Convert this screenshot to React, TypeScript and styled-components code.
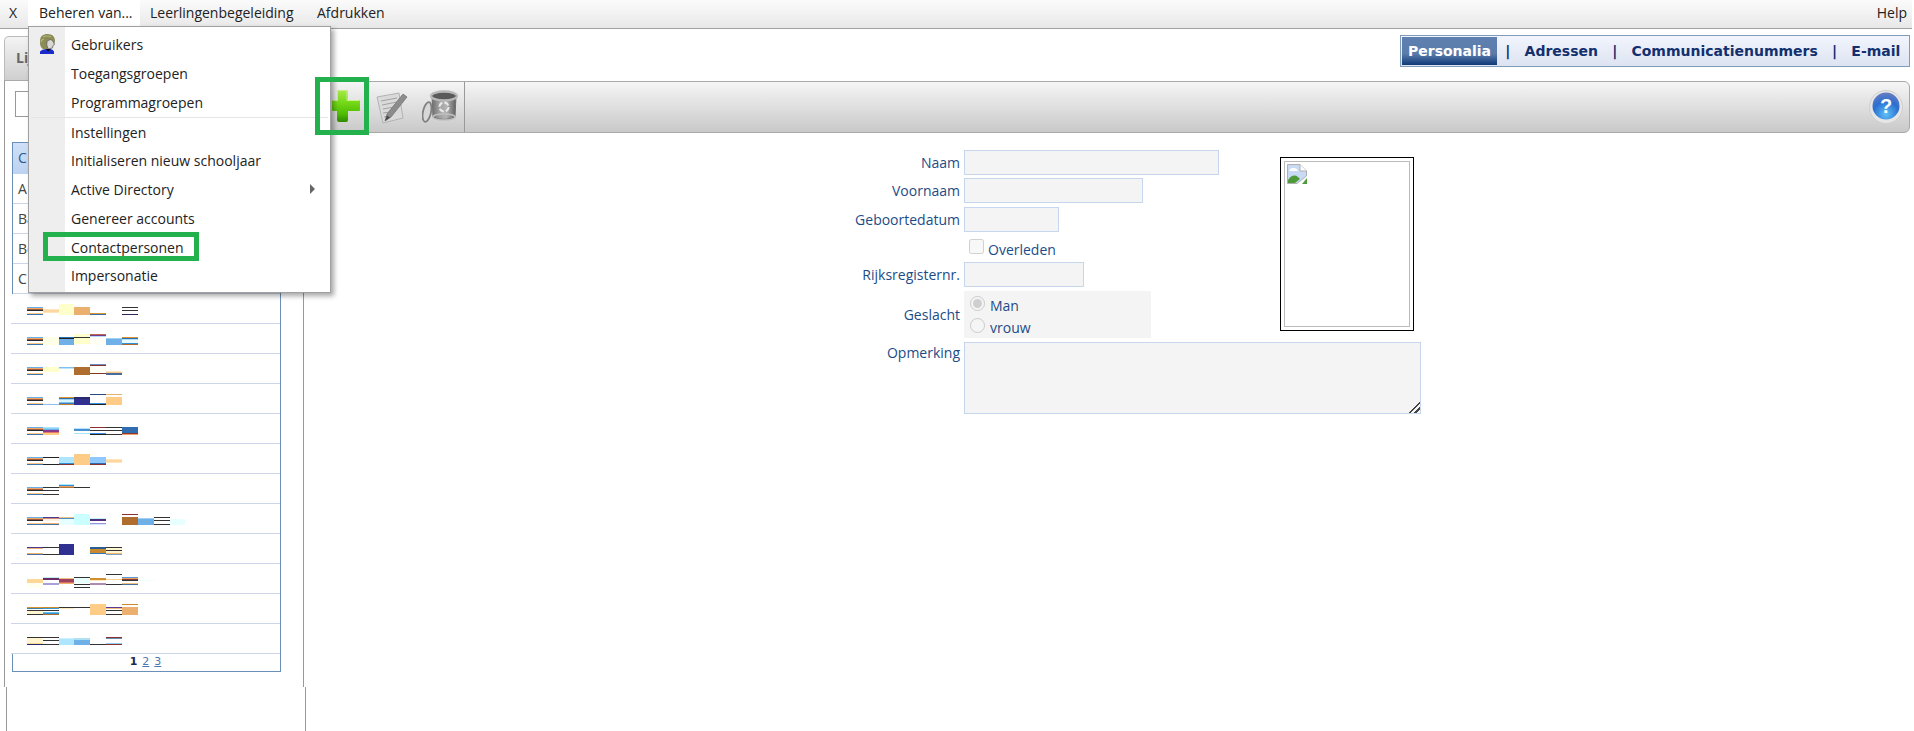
import React from "react";
import styled, { createGlobalStyle } from "styled-components";

const Global = createGlobalStyle`
  html, body { margin: 0; padding: 0; background: #fff; overflow: hidden; }
  body { font-family: "Open Sans", "Noto Sans", sans-serif; font-size: 14px; }
  * { box-sizing: border-box; }
`;

const Page = styled.div`
  position: relative;
  width: 1914px;
  height: 731px;
  overflow: hidden;
  background: #fff;
`;

const MenuBar = styled.div`
  display: flex;
  align-items: center;
  height: 29px;
  margin-right: 2px;
  padding-bottom: 1px;
  background: linear-gradient(#fbfbfb, #e8e8e8);
  border-bottom: 1px solid #a0a0a0;
`;

const MenuItem = styled.div<{ $active?: boolean; $push?: boolean; $w?: number; $left?: number }>`
  height: 28px;
  line-height: 25px;
  padding: 0 ${(p) => (p.$push ? 5 : 0)}px 0 ${(p) => p.$left ?? 10}px;
  width: ${(p) => (p.$w ? `${p.$w}px` : "auto")};
  white-space: nowrap;
  color: #222;
  background: ${(p) => (p.$active ? "#fff" : "transparent")};
  margin-left: ${(p) => (p.$push ? "auto" : "0")};
`;

const Body = styled.div`
  display: flex;
  align-items: stretch;
  height: 702px;
`;

const LeftColumn = styled.div`
  width: 302px;
  margin-left: 4px;
  padding-top: 7px;
  display: flex;
  flex-direction: column;
  flex: none;
`;

const Tab = styled.div`
  width: 120px;
  height: 44px;
  padding: 11px 0 0 11px;
  font-weight: 700;
  font-size: 14px;
  color: #666;
  border: 1px solid #bbb;
  border-bottom: 0;
  border-radius: 5px 5px 0 0;
  background: linear-gradient(#f4f4f4, #cfcfcf);
`;

const Panel = styled.div`
  height: 607px;
  width: 300px;
  border-left: 1px solid #999;
  border-right: 1px solid #999;
  border-top: 1px solid #aaa;
  padding: 10px 0 0 10px;
`;

const LowerPanel = styled.div`
  flex: 1;
  width: 300px;
  margin-left: 2px;
  border-left: 1px solid #999;
  border-right: 1px solid #999;
`;

const Search = styled.div`
  width: 180px;
  height: 26px;
  border: 1px solid #999;
`;

const Table = styled.div`
  margin: 25px 0 0 -3px;
  width: 269px;
  border: 1px solid #6a8fb8;
  border-top-width: 1px;
`;

const HeaderRow = styled.div`
  height: 31px;
  background: linear-gradient(#cfe0f8, #bcd3f2);
  color: #2a5a90;
  font-size: 14px;
  line-height: 30px;
  padding-left: 5px;
`;

const TextRow = styled.div`
  height: 30px;
  border-bottom: 1px solid #ccd6e8;
  color: #444;
  font-size: 14px;
  line-height: 29px;
  padding-left: 5px;
`;

const StripeRow = styled.div`
  height: 30px;
  margin-left: -2px;
  position: relative;
  background: #fff;
  border-bottom: 1px solid #ccd6e8;
`;

const StripeArt = styled.svg`
  display: block;
`;

const Pager = styled.div`
  height: 17px;
  display: flex;
  justify-content: center;
  gap: 5px;
  font-family: "DejaVu Sans", sans-serif;
  font-size: 11px;
  line-height: 16px;
  padding-right: 2px;
`;

const PageNum = styled.span<{ $current?: boolean }>`
  font-weight: ${(p) => (p.$current ? 700 : 400)};
  color: ${(p) => (p.$current ? "#1d2b50" : "#4a78b4")};
  text-decoration: ${(p) => (p.$current ? "none" : "underline")};
`;

const RightColumn = styled.div`
  flex: 1;
  min-width: 0;
  padding-right: 4px;
  display: flex;
  flex-direction: column;
  align-items: stretch;
`;

const TabStrip = styled.div`
  align-self: flex-end;
  display: flex;
  align-items: stretch;
  margin-top: 6px;
  height: 32px;
  padding: 1px;
  width: 510px;
  border: 1px solid #7f9db9;
  background: linear-gradient(#f2f5fc, #dde3f2);
  font-family: "DejaVu Sans", sans-serif;
  font-weight: 700;
  font-size: 14px;
  color: #12306e;
`;

const StripTab = styled.div<{ $active?: boolean }>`
  padding: 0 6px;
  line-height: 28px;
  white-space: nowrap;
  color: ${(p) => (p.$active ? "#fff" : "#12306e")};
  background: ${(p) =>
    p.$active ? "linear-gradient(#5f80b0 0, #5a7cab 60%, #0f3a78 100%)" : "transparent"};
`;

const StripSep = styled.div`
  line-height: 28px;
  width: 21.500px;
  text-align: center;
`;

const Toolbar = styled.div`
  margin-top: 14px;
  margin-left: 3px;
  height: 52px;
  flex: none;
  display: flex;
  align-items: center;
  border: 1px solid #a8a8a8;
  border-radius: 6px;
  background: linear-gradient(#f5f5f5, #c9c9c9);
  padding-left: 21px;
`;

const ToolIcon = styled.svg<{ $gap?: number; $lift?: number }>`
  flex: none;
  display: block;
  margin-left: ${(p) => p.$gap ?? 0}px;
  margin-top: ${(p) => -(p.$lift ?? 0)}px;
  filter: blur(0.4px);
`;

const ToolSeparator = styled.div`
  align-self: stretch;
  width: 1px;
  margin-left: 6px;
  background: #999;
`;

const HelpButton = styled.svg`
  margin-left: auto;
  margin-right: 6px;
  display: block;
`;

const Form = styled.div`
  margin-top: 17px;
  padding-left: 458px;
  display: grid;
  grid-template-columns: 200px 316px 141px;
  grid-template-rows: 28px 29px 28px 27px 29px 51px 72px;
  color: #1c4c86;
`;

const Label = styled.div<{ $row: number; $lift?: number }>`
  grid-column: 1;
  grid-row: ${(p) => p.$row};
  text-align: right;
  padding-right: 4px;
  line-height: 25px;
  align-self: start;
  margin-top: ${(p) => -(p.$lift ?? 0)}px;
`;

const TextField = styled.input<{ $row: number; $w: number }>`
  grid-column: 2;
  grid-row: ${(p) => p.$row};
  width: ${(p) => p.$w}px;
  height: 25px;
  padding: 0;
  background: #f4f4f4;
  border: 1px solid #c6d6ec;
  border-radius: 0;
`;

const CheckLine = styled.label`
  grid-column: 2;
  grid-row: 4;
  display: flex;
  align-items: flex-start;
  padding: 4px 0 0 5px;
  gap: 4px;
`;

const Box = styled.input`
  margin: 0;
  width: 15px;
  height: 15px;
  flex: none;
`;

const CheckText = styled.span`
  line-height: 22px;
`;

const RadioBlock = styled.div`
  grid-column: 2;
  grid-row: 6;
  width: 187px;
  height: 47px;
  background: #f4f4f4;
  padding: 5px 0 0 6px;
  display: flex;
  flex-direction: column;
  gap: 7px;
  overflow: hidden;
`;

const RadioLine = styled.label`
  display: flex;
  align-items: flex-start;
  gap: 5px;
  height: 15px;
`;

const RadioText = styled.span`
  line-height: 20px;
`;

const Notes = styled.textarea`
  grid-column: 2 / span 2;
  grid-row: 7;
  width: 457px;
  height: 72px;
  margin: 0;
  padding: 0;
  display: block;
  background: #f4f4f4;
  border: 1px solid #c6d6ec;
  border-radius: 0;
  &::-webkit-resizer {
    background: linear-gradient(
      135deg,
      transparent 62%,
      #444 62%,
      #444 69%,
      transparent 69%,
      transparent 80%,
      #444 80%,
      #444 87%,
      transparent 87%
    );
  }
`;

const Photo = styled.div`
  grid-column: 3;
  grid-row: 1 / span 6;
  width: 134px;
  height: 174px;
  margin-top: 7px;
  border: 1px solid #000;
  padding: 3px;
`;

const PhotoInner = styled.div`
  height: 100%;
  border: 1px solid #bbb;
  padding: 2px;
`;

const DropMenu = styled.div`
  position: absolute;
  left: 28px;
  top: 26px;
  width: 303px;
  height: 267px;
  background: linear-gradient(90deg, #eeeeee 36px, #ffffff 36px);
  border: 1px solid #a0a0a0;
  box-shadow: 3px 3px 5px rgba(0, 0, 0, 0.35);
  padding-top: 3px;
  color: #222;
  z-index: 3;
`;

const DropItem = styled.div<{ $h: number }>`
  height: ${(p) => p.$h}px;
  line-height: ${(p) => p.$h}px;
  padding-left: 42px;
  position: relative;
`;

const DropDivider = styled.div`
  height: 1px;
  margin: 0 2px;
  background: #e4e4e4;
`;

const UserIcon = styled.svg`
  position: absolute;
  left: 9px;
  top: 3px;
`;

const Arrow = styled.span`
  position: absolute;
  right: 15px;
  top: 9px;
  width: 0;
  height: 0;
  border-left: 5px solid #666;
  border-top: 5px solid transparent;
  border-bottom: 5px solid transparent;
`;

const Highlight = styled.div<{ $x: number; $y: number; $w: number; $h: number }>`
  position: absolute;
  left: ${(p) => p.$x}px;
  top: ${(p) => p.$y}px;
  width: ${(p) => p.$w}px;
  height: ${(p) => p.$h}px;
  border: 5px solid #22b14c;
  z-index: 4;
`;

type L = [number, number, string, number?];
type Cell = [number, L[]];

const X = [27, 43, 59, 74, 90, 106, 122, 138, 154, 170, 185];

const F: L[] = [
  [13, 1, "#6aaee8"],
  [14, 1, "#eda868"],
  [15, 1, "#a0583a"],
  [16, 1, "#2a2a2a"],
  [19, 1, "#ffc98a"],
  [20, 1, "#3e76ac"],
];

const D = "#333333";

const rows: Cell[][] = [
  [
    [0, F],
    [1, [[15, 4, "#ffe4bc"], [16, 2, "#fdd7a2"]]],
    [2, [[10, 11, "#ffffcc"]]],
    [3, [[13, 8, "#ebb06f"]]],
    [4, [[19, 1, "#d9942f"], [20, 1, "#3a6ea5"]]],
    [6, [[13, 1, D], [16, 1, D], [20, 1, "#2a2a5a"]]],
  ],
  [
    [0, F],
    [1, [[13, 8, "#ffffe8"]]],
    [2, [[13, 1, "#2a6db0"], [14, 1, "#222"], [15, 6, "#6fb0e8"]]],
    [3, [[10, 10, "#ffffcc"], [13, 1, D]]],
    [4, [[10, 1, "#b5694a"], [11, 1, "#7a3a8a"], [12, 1, "#b8d8ff"], [13, 8, "#fffff5"]]],
    [5, [[14, 1, "#a0d0f5"], [15, 6, "#6fb0e8"]]],
    [6, [[13, 1, "#d9942f"], [14, 1, "#2a6db0"], [15, 1, "#aee0f8"], [16, 3, "#e8fbff"], [19, 1, "#3090d8"], [20, 1, "#b06a30"]]],
  ],
  [
    [0, F],
    [1, [[13, 5, "#ffffcc"]]],
    [2, [[13, 1, "#7fc0f0"], [14, 1, "#bfe6ff"]]],
    [3, [[13, 8, "#b06d30"]]],
    [4, [[10, 1, "#6a8fc0"], [11, 1, "#8a3030"], [12, 7, "#fffff5"], [19, 1, "#803a20"]]],
    [5, [[17, 1, "#ffe8c0"], [18, 1, "#f5c890"], [19, 2, "#4a6a9a"]]],
  ],
  [
    [0, F],
    [1, [[20, 1, "#8fc0f0"]]],
    [2, [[13, 1, "#d9942f"], [14, 1, "#3a6ea5"], [15, 1, "#9ad8f5"], [16, 2, "#d8f6ff"], [18, 1, "#7fc0e8"], [19, 1, "#3a80c0"], [20, 1, "#c08030"]]],
    [3, [[13, 2, "#2a2a6a"], [15, 6, "#303090"]]],
    [4, [[10, 1, "#2a4a7a"], [19, 1, "#3a90e0"], [20, 1, "#222"]]],
    [5, [[10, 1, "#ebb06f"], [13, 8, "#ffcc88"]]],
  ],
  [
    [0, F],
    [1, [[13, 1, "#aee6ff"], [14, 1, "#8fd0f5"], [15, 1, "#6fb0e8"], [16, 2, "#8a3a8a"], [18, 1, "#e07a6a"], [19, 2, "#ffcc88"]]],
    [3, [[14, 1, "#aee6ff"], [15, 2, "#4a90d0"], [19, 1, "#aee6ff"]]],
    [4, [[13, 1, "#8a3030"], [16, 1, D], [19, 1, "#3a90e0"], [20, 1, "#222"]]],
    [5, [[13, 1, D], [16, 1, D], [20, 1, D]]],
    [6, [[13, 6, "#2f6db0"], [19, 1, "#8a3a30"], [20, 1, "#f0a060"]]],
  ],
  [
    [0, F],
    [1, [[13, 1, "#222"], [20, 1, "#222"]]],
    [2, [[13, 6, "#aee6ff"], [19, 1, "#3090d8"], [20, 1, "#8a3030"]]],
    [3, [[10, 11, "#ffcc88"]]],
    [4, [[13, 6, "#8fc8ff"], [19, 1, "#2f6db0"], [20, 1, "#8a3030"]]],
    [5, [[15, 4, "#ffe4bc"], [16, 2, "#fdd7a2"]]],
  ],
  [
    [0, F],
    [1, [[13, 1, D], [16, 1, D], [20, 1, D]]],
    [2, [[10, 1, "#aee6ff"], [11, 1, "#3090d8"], [12, 1, "#e8a060"], [13, 1, "#b0703a"]]],
    [3, [[13, 1, D]]],
  ],
  [
    [0, F],
    [1, [[13, 1, "#4a3a90"], [14, 1, "#d08a7a"], [15, 2, "#fff0e0"], [19, 1, "#f0b070"], [20, 1, "#4a70a0"]]],
    [2, [[13, 1, "#f0c080"], [14, 1, "#4a90c0"], [15, 6, "#e8ffff"]]],
    [3, [[10, 11, "#ccffff"]]],
    [4, [[14, 1, "#c0f5f0"], [15, 2, "#503080"], [19, 1, "#a090e0"], [20, 1, "#d0e8ff"]]],
    [6, [[10, 1, "#8a3030"], [13, 8, "#b06d30"]]],
    [7, [[14, 1, "#a0d0f5"], [15, 6, "#6fb0e8"]]],
    [8, [[13, 1, D], [16, 1, D], [20, 1, D]]],
    [9, [[15, 6, "#e8ffff"]]],
  ],
  [
    [0, [[13, 1, "#4a3a90"], [14, 1, "#f0b070"], [19, 1, "#f0b070"], [20, 1, "#4a70a0"]]],
    [1, [[13, 1, D], [20, 1, D]]],
    [2, [[10, 11, "#303090"]]],
    [4, [[13, 1, "#2a6090"], [14, 1, "#2a5a90"], [15, 4, "#c98a2f"], [19, 1, "#2878c0"]]],
    [5, [[13, 1, D], [14, 2, "#fff5d0"], [16, 1, D], [17, 2, "#fff5d0"], [19, 1, "#f0b870"], [20, 1, "#7aa0c8"]]],
  ],
  [
    [0, [[15, 4, "#ffd898"], [19, 5, "#fffff0"]]],
    [1, [[13, 1, "#bff0f0"], [14, 2, "#6a2a6a"], [19, 2, "#a8a0d8"]]],
    [2, [[14, 1, "#f0c080"], [15, 3, "#a04060"], [18, 1, "#d07060"], [19, 1, "#f0b070"]]],
    [3, [[13, 1, D], [14, 5, "#e8ffff"], [20, 1, D], [23, 1, D]]],
    [4, [[14, 2, "#d09030"], [16, 1, "#ffe8c0"], [19, 2, "#b08ab0"]]],
    [5, [[10, 1, D], [15, 1, "#ffd090"], [20, 1, D]]],
    [6, [[13, 1, "#5a9ad8"], [14, 1, "#e8a060"], [15, 1, "#8a3a30"], [16, 1, D], [19, 1, "#f0c080"], [20, 1, "#4a70a0"]]],
    [7, [[16, 1, "#ecfff8"]]],
  ],
  [
    [0, [[13, 1, "#d9942f"], [14, 1, "#3a80b0"], [16, 1, D], [17, 3, "#fff5d0"], [20, 1, D]]],
    [1, [[13, 1, "#c98a2f"], [14, 1, "#3a9ad8"], [16, 1, D], [18, 1, "#60c0f0"], [19, 1, "#3090d8"], [20, 1, "#b06d30"]]],
    [2, [[13, 1, D], [14, 1, "#ffe8c0"]]],
    [3, [[13, 1, D]]],
    [4, [[10, 11, "#ffcc88"]]],
    [5, [[13, 1, "#5a3a90"], [14, 1, "#f0c080"], [16, 1, D], [20, 1, D]]],
    [6, [[10, 1, "#c98a2f"], [13, 8, "#ebb06f"]]],
  ],
  [
    [0, [[13, 1, D], [14, 5, "#fff5d0"], [19, 1, "#ffd898"], [20, 1, "#222a6a"]]],
    [1, [[13, 1, D], [16, 1, D], [20, 1, D]]],
    [2, [[14, 1, "#ccf0ff"], [15, 6, "#aee6ff"]]],
    [3, [[14, 2, "#aee0f0"], [16, 5, "#6fb0e8"]]],
    [4, [[20, 1, D]]],
    [5, [[13, 1, "#8a3030"], [14, 1, "#6a90b0"], [19, 1, "#8fd0f5"], [20, 1, "#8a3030"]]],
  ],
];

function Stripes({ cells }: { cells: Cell[] }) {
  return (
    <StripeArt width={269} height={29} viewBox="11 0 269 29">
      {cells.flatMap(([c, ls]) =>
        ls.map(([y, h, fill], i) => (
          <rect key={`${c}-${i}`} x={X[c]} y={y} width={X[c + 1] - X[c]} height={h} fill={fill} />
        ))
      )}
    </StripeArt>
  );
}

function PlusIcon() {
  return (
    <ToolIcon $lift={3} width={30} height={33} viewBox="0 0 30 33">
      <defs>
        <linearGradient id="pl" x1="0" y1="0" x2="0" y2="1">
          <stop offset="0" stopColor="#a8e84a" />
          <stop offset="0.4" stopColor="#74d818" />
          <stop offset="0.75" stopColor="#4fbc00" />
          <stop offset="1" stopColor="#2f8a00" />
        </linearGradient>
      </defs>
      <path
        d="M6 2.500Q6 1 8 1H15Q17 1 17 2.500V11H28Q29 11 29 12.500V20.500Q29 22 28 22H17V31Q17 33 15 33H8Q6 33 6 31V22H2Q1 22 1 20.500V12.500Q1 11 2 11H6Z"
        fill="url(#pl)"
      />
      <path d="M2 11.500H6.500V2Q11 0.800 16 2V11.500H28" fill="none" stroke="#c8f28a" strokeWidth="1" />
    </ToolIcon>
  );
}

function PencilIcon() {
  return (
    <ToolIcon $gap={15} width={32} height={35} viewBox="0 0 32 35">
      <path d="M1 7L23 3L27 28L7 33Z" fill="#dadada" stroke="#b2b2b2" strokeWidth="1" />
      <path d="M5 11L21 8M6 15L21 12M7 19L18 17M7 23L14 22M8 27L12 26" stroke="#a2a2a2" strokeWidth="1" />
      <path d="M9 31L11 24L27 4L31 7L15 27Z" fill="#8c8c8c" stroke="#767676" strokeWidth="0.8" />
      <path d="M9 31L11 25.500L14 27.500Z" fill="#4a4a4a" />
    </ToolIcon>
  );
}

function BinIcon() {
  return (
    <ToolIcon $gap={14} $lift={2} width={36} height={34} viewBox="0 0 36 34">
      <defs>
        <linearGradient id="bn" x1="0" y1="0" x2="1" y2="0">
          <stop offset="0" stopColor="#6e6e6e" />
          <stop offset="0.3" stopColor="#a0a0a0" />
          <stop offset="0.6" stopColor="#b4b4b4" />
          <stop offset="1" stopColor="#5e5e5e" />
        </linearGradient>
      </defs>
      <path d="M10 7H34L33 28Q22 33 11 28Z" fill="url(#bn)" stroke="#6e6e6e" strokeWidth="1" />
      <ellipse cx="22" cy="7" rx="13" ry="4.500" fill="#5a5a5a" stroke="#b8b8b8" strokeWidth="2.400" />
      <ellipse cx="22" cy="28" rx="11" ry="3" fill="none" stroke="#c0c0c0" strokeWidth="1.500" />
      <ellipse cx="5" cy="23" rx="4" ry="10" fill="#d8d8d8" stroke="#808080" strokeWidth="1.800" transform="rotate(12 5 23)" />
      <circle cx="22" cy="18" r="4.500" fill="none" stroke="#e8e8e8" strokeWidth="2" strokeDasharray="5 2" />
    </ToolIcon>
  );
}

function HelpIcon() {
  return (
    <HelpButton width={34} height={34} viewBox="0 0 34 34">
      <defs>
        <radialGradient id="hb" cx="0.5" cy="0.8" r="0.8">
          <stop offset="0" stopColor="#5ec0f8" />
          <stop offset="0.6" stopColor="#2a6fd0" />
          <stop offset="1" stopColor="#6a7cc0" />
        </radialGradient>
      </defs>
      <circle cx="17" cy="17" r="16.500" fill="#e6e6e6" stroke="#cfcfcf" />
      <circle cx="17" cy="16" r="13.500" fill="url(#hb)" />
      <text x="17" y="23" textAnchor="middle" fontFamily="Liberation Sans, sans-serif" fontWeight="700" fontSize="20" fill="#fff">
        ?
      </text>
    </HelpButton>
  );
}

const BrokenArt = styled.svg`
  display: block;
`;

function BrokenImage() {
  return (
    <BrokenArt width={20} height={20} viewBox="0 0 20 20">
      <path d="M0.500 0.500H13L19.500 7V12L10 19.500H0.500Z" fill="#c9daf4" stroke="#b0b0b0" />
      <path d="M13 0.500V7H19.500" fill="#fff" stroke="#b0b0b0" />
      <path d="M2 7Q4 3 7 4Q10 4 11 7Z" fill="#fff" />
      <path d="M1 19V16Q6 9 11 13L13 15L8 19Z" fill="#4e9a3a" />
      <path d="M15 20L20 14V20Z" fill="#4e9a3a" />
    </BrokenArt>
  );
}

export default function App() {
  return (
    <Page>
      <Global />
      <MenuBar>
        <MenuItem $w={28} $left={9}>X</MenuItem>
        <MenuItem $active $w={112} $left={11}>Beheren van...</MenuItem>
        <MenuItem $w={167}>Leerlingenbegeleiding</MenuItem>
        <MenuItem>Afdrukken</MenuItem>
        <MenuItem $push>Help</MenuItem>
      </MenuBar>

      <Body>
        <LeftColumn>
          <Tab>Lijst</Tab>
          <Panel>
            <Search />
            <Table>
              <HeaderRow>C</HeaderRow>
              <TextRow>A</TextRow>
              <TextRow>Ba</TextRow>
              <TextRow>Be</TextRow>
              <TextRow>C</TextRow>
              {rows.map((cells, i) => (
                <StripeRow key={i}>
                  <Stripes cells={cells} />
                </StripeRow>
              ))}
              <Pager>
                <PageNum $current>1</PageNum>
                <PageNum>2</PageNum>
                <PageNum>3</PageNum>
              </Pager>
            </Table>
          </Panel>
          <LowerPanel />
        </LeftColumn>

        <RightColumn>
          <TabStrip>
            <StripTab $active>Personalia</StripTab>
            <StripSep>|</StripSep>
            <StripTab>Adressen</StripTab>
            <StripSep>|</StripSep>
            <StripTab>Communicatienummers</StripTab>
            <StripSep>|</StripSep>
            <StripTab>E-mail</StripTab>
          </TabStrip>

          <Toolbar>
            <PlusIcon />
            <PencilIcon />
            <BinIcon />
            <ToolSeparator />
            <HelpIcon />
          </Toolbar>

          <Form>
            <Label $row={1}>Naam</Label>
            <TextField $row={1} $w={255} disabled />
            <Label $row={2}>Voornaam</Label>
            <TextField $row={2} $w={179} disabled />
            <Label $row={3}>Geboortedatum</Label>
            <TextField $row={3} $w={95} disabled />
            <CheckLine>
              <Box type="checkbox" disabled />
              <CheckText>Overleden</CheckText>
            </CheckLine>
            <Label $row={5}>Rijksregisternr.</Label>
            <TextField $row={5} $w={120} disabled />
            <Label $row={6} $lift={-11}>
              Geslacht
            </Label>
            <RadioBlock>
              <RadioLine>
                <Box type="radio" name="g" disabled defaultChecked />
                <RadioText>Man</RadioText>
              </RadioLine>
              <RadioLine>
                <Box type="radio" name="g" disabled />
                <RadioText>vrouw</RadioText>
              </RadioLine>
            </RadioBlock>
            <Label $row={7} $lift={2}>
              Opmerking
            </Label>
            <Notes disabled />
            <Photo>
              <PhotoInner>
                <BrokenImage />
              </PhotoInner>
            </Photo>
          </Form>
        </RightColumn>
      </Body>

      <DropMenu>
        <DropItem $h={29}>
          <UserIcon width={19} height={22} viewBox="0 0 19 22">
            <path d="M2 10Q1 2 8 1Q16 0 17 7Q17 11 15 12L9 16H5Q2 14 2 10Z" fill="#8b8b56" />
            <path d="M5 4Q9 2 13 4M3 9Q4 6 6 6" fill="none" stroke="#b4b47c" strokeWidth="1.200" />
            <path d="M9 8Q13 5 15 8L16.500 11.500L15 12.500L14.500 15L10 16Q8 12 9 8Z" fill="#d9d6d4" stroke="#555" strokeWidth="0.700" />
            <path d="M2 21V18.500Q4 16 8 16H12Q15 16 16 18.500V21Z" fill="#1a2acc" />
            <path d="M8 16L10 18.500L13 16Z" fill="#111" />
          </UserIcon>
          Gebruikers
        </DropItem>
        <DropItem $h={29}>Toegangsgroepen</DropItem>
        <DropItem $h={29}>Programmagroepen</DropItem>
        <DropDivider />
        <DropItem $h={29}>Instellingen</DropItem>
        <DropItem $h={28}>Initialiseren nieuw schooljaar</DropItem>
        <DropItem $h={29}>
          Active Directory
          <Arrow />
        </DropItem>
        <DropItem $h={29}>Genereer accounts</DropItem>
        <DropItem $h={29}>Contactpersonen</DropItem>
        <DropItem $h={28}>Impersonatie</DropItem>
      </DropMenu>

      <Highlight $x={315} $y={77} $w={54} $h={58} />
      <Highlight $x={43} $y={232} $w={156} $h={29} />
    </Page>
  );
}
